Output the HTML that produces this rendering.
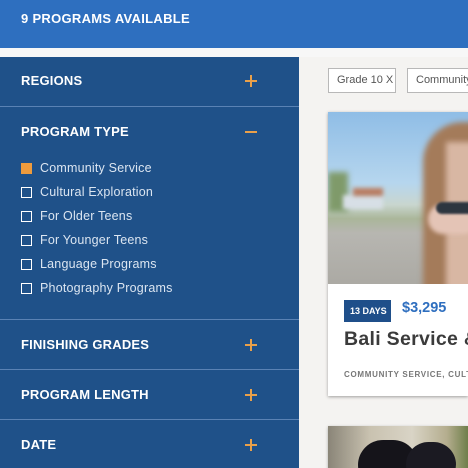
<!DOCTYPE html>
<html><head><style>
*{margin:0;padding:0;box-sizing:border-box}
html,body{width:468px;height:468px;overflow:hidden}
body{background:#f4f3f1;font-family:"Liberation Sans",sans-serif;position:relative}
.hdr{position:absolute;left:0;top:0;width:468px;height:48px;background:#2e6fbf;color:#fff;font-weight:bold;font-size:13px;padding:11px 0 0 21px;letter-spacing:.3px}
.gap{position:absolute;left:0;top:48px;width:468px;height:9px;background:#f7f7f7}
.side{position:absolute;left:0;top:57px;width:299px;height:411px;background:#1f5189}
.sec{position:absolute;left:0;width:299px;border-top:1px solid #5a82b4;color:#fff;font-size:13px}
.sec .t{position:absolute;left:21px;letter-spacing:.2px;font-weight:bold}
.plus{position:absolute;left:245px;width:12px;height:12px}
.plus:before{content:"";position:absolute;left:0;top:5px;width:12px;height:1.5px;background:#e9a04a}
.plus.p:after{content:"";position:absolute;left:5.3px;top:0;width:1.5px;height:12px;background:#e9a04a}
.item{position:absolute;left:21px;color:#dbe5f1;font-size:12.5px;font-weight:normal;letter-spacing:.2px}
.item i{position:absolute;left:0;top:1px;width:11px;height:11px;border:1.5px solid #fff}
.item span{position:absolute;left:19px;top:-1px;white-space:nowrap}
.tag{position:absolute;top:68px;height:25px;border:1px solid #b8b8b8;background:#fff;color:#555;font-size:11px;padding:5px 0 0 8px;white-space:nowrap;overflow:hidden}
.card{position:absolute;left:328px;top:112px;width:140px;height:284px;background:#fff;box-shadow:0 1px 3px rgba(0,0,0,.35);overflow:hidden}
.img{position:absolute;left:0;top:0;width:150px;height:178px;background:linear-gradient(180deg,#8fbde6 0%,#b6d6ee 40%,#c9d6cf 52%,#aab69a 60%,#b7b6b1 68%,#aaa8a2 100%);overflow:hidden}
</style></head><body>
<div class="hdr">9 PROGRAMS AVAILABLE</div>
<div class="gap"></div>
<div class="side">
<div class="sec" style="top:-1px;height:50px;border-top:none"><span class="t" style="top:17px">REGIONS</span><span class="plus p" style="top:19px"></span></div>
<div class="sec" style="top:49px;height:213px"><span class="t" style="top:17px">PROGRAM TYPE</span><span class="plus" style="top:19px"></span>
<div class="item" style="top:55px"><i style="background:#ee9b3d;border-color:#ee9b3d"></i><span>Community Service</span></div>
<div class="item" style="top:79px"><i></i><span>Cultural Exploration</span></div>
<div class="item" style="top:103px"><i></i><span>For Older Teens</span></div>
<div class="item" style="top:127px"><i></i><span>For Younger Teens</span></div>
<div class="item" style="top:151px"><i></i><span>Language Programs</span></div>
<div class="item" style="top:175px"><i></i><span>Photography Programs</span></div>
</div>
<div class="sec" style="top:262px;height:50px"><span class="t" style="top:17px">FINISHING GRADES</span><span class="plus p" style="top:19px"></span></div>
<div class="sec" style="top:312px;height:50px"><span class="t" style="top:17px">PROGRAM LENGTH</span><span class="plus p" style="top:19px"></span></div>
<div class="sec" style="top:362px;height:49px"><span class="t" style="top:17px">DATE</span><span class="plus p" style="top:19px"></span></div>
</div>
<div class="tag" style="left:328px;width:68px">Grade 10 X</div>
<div class="tag" style="left:407px;width:61px;border-right:none">Community</div>
<div class="card">
<div class="img">
<div style="position:absolute;left:0;top:60px;width:20px;height:40px;background:#7f9a6a;filter:blur(3px)"></div>
<div style="position:absolute;left:15px;top:83px;width:40px;height:14px;background:#d7dfe6;filter:blur(2px)"></div>
<div style="position:absolute;left:25px;top:76px;width:30px;height:8px;background:#b97d63;filter:blur(2px)"></div>
<div style="position:absolute;left:95px;top:10px;width:80px;height:180px;border-radius:40px 0 0 0;background:#a47b5a;filter:blur(3px)"></div>
<div style="position:absolute;left:118px;top:30px;width:40px;height:160px;background:#d8b7a3;filter:blur(3px)"></div>
<div style="position:absolute;left:100px;top:92px;width:50px;height:30px;border-radius:15px;background:#e4c4b6;filter:blur(2px)"></div>
<div style="position:absolute;left:108px;top:90px;width:45px;height:12px;border-radius:8px;background:#2d3640;filter:blur(1px)"></div>
<div style="position:absolute;left:0;top:172px;width:150px;height:8px;background:#fff"></div>
</div>
<div style="position:absolute;left:16px;top:188px;width:47px;height:22px;background:#1f4f8a;color:#fff;font-size:9px;font-weight:bold;padding:6px 0 0 6px">13 DAYS</div>
<div style="position:absolute;left:74px;top:188px;color:#2f6fbf;font-size:14.5px;font-weight:bold">$3,295</div>
<div style="position:absolute;left:16px;top:216px;color:#3b3b3b;font-size:19.5px;font-weight:bold;white-space:nowrap;letter-spacing:.3px">Bali Service &amp; A</div>
<div style="position:absolute;left:16px;top:258px;color:#777;font-size:8px;font-weight:bold;letter-spacing:.7px;white-space:nowrap">COMMUNITY SERVICE, CULTU</div>
</div>
<div style="position:absolute;left:328px;top:426px;width:140px;height:50px;background:linear-gradient(90deg,#8a8578,#c9c2b0 30%,#d9d4c6 60%,#b4ad8e 85%,#6f7f4a);box-shadow:0 1px 3px rgba(0,0,0,.3);overflow:hidden">
<div style="position:absolute;left:30px;top:14px;width:60px;height:50px;border-radius:30px;background:#15141a"></div>
<div style="position:absolute;left:78px;top:16px;width:50px;height:45px;border-radius:25px;background:#1b1a22"></div>
</div>
</body></html>
